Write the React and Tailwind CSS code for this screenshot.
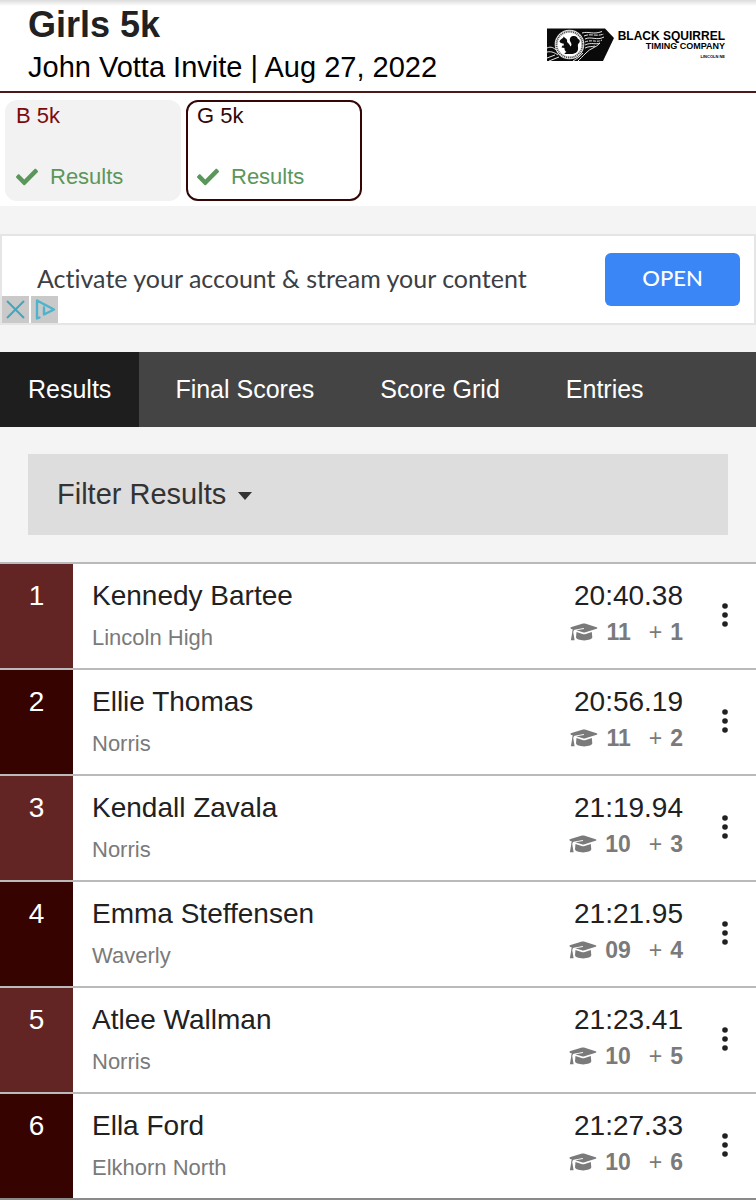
import React from "react";
import { FaCheck } from "react-icons/fa";

const runners = [
  { place: 1, name: "Kennedy Bartee", school: "Lincoln High", time: "20:40.38", grade: "11" },
  { place: 2, name: "Ellie Thomas", school: "Norris", time: "20:56.19", grade: "11" },
  { place: 3, name: "Kendall Zavala", school: "Norris", time: "21:19.94", grade: "10" },
  { place: 4, name: "Emma Steffensen", school: "Waverly", time: "21:21.95", grade: "09" },
  { place: 5, name: "Atlee Wallman", school: "Norris", time: "21:23.41", grade: "10" },
  { place: 6, name: "Ella Ford", school: "Elkhorn North", time: "21:27.33", grade: "10" },
];

function Squirrel() {
  return (
    <svg viewBox="0 0 67 34" className="h-[34px] w-[67px]" aria-hidden="true">
      <path d="M0 0.500H58L67 10L56 33H0Z" fill="#0a0a0a" />
      <g fill="none" stroke="#fff" strokeWidth="0.9">
        <path d="M0 20C4 18 7 20 9 22M0 24C5 23 8 25 11 27M0 30L8 27M2 33L12 29" />
        <path d="M35 5C42 3 46 7 55 3.500" />
        <path d="M37 8C44 5 48 9 57 6" strokeDasharray="4 1" />
        <path d="M38 11C44 8 50 13 57 9" />
        <path d="M38 14C45 11 50 15 55 12" strokeDasharray="3 1" />
        <path d="M38 17C44 14 49 17 53 15C49 20 43 20 39 25C36 28 33 31 31 33" />
        <path d="M38 20C42 18 45 19 48 18M36 25C33 29 29 31 26 33" />
      </g>
      <circle cx="22.5" cy="16.500" r="14.8" fill="#e8e8e8" />
      <circle cx="22.5" cy="16.500" r="13" fill="none" stroke="#444" strokeWidth="1.8" strokeDasharray="1 0.9" />
      <circle cx="22.5" cy="16.500" r="11.6" fill="#fff" />
      <path
        d="M12.500 13.500C13 11.500 15 10.500 16 10L16.800 8.500L18 10C20 11 20.500 12.500 20 14C21.500 15 22.800 17 23.500 18.500C25 17 24.500 15.500 23.500 14C22 11.500 23 8.500 26 8C29 7.500 30.500 9 31 11C33 11.500 33.500 14 31.500 15.500C30 17 31.500 19 31 21.500C30.500 24.500 27.500 26 24 26H17.500C17.500 24.500 19 24.500 19.500 24C18 23 17.200 21.500 17.500 20L14.500 19.500L15.500 17.500L17 17.500L16.500 15.500C15 15.500 13 15 12.500 13.500Z"
        fill="#0a0a0a"
      />
    </svg>
  );
}

function GradCap() {
  return (
    <svg viewBox="0 0 28 18" className="mr-2 h-[18px] w-7" fill="#7a7a7a" aria-hidden="true">
      <path d="M0.500 5C0.500 4.500 1 4.300 1.500 4.100L13 0.600C13.700 0.400 14.300 0.400 15 0.600L26.600 4.200C27.600 4.500 27.600 5.400 26.600 5.700L15.500 9.200C14.500 9.500 13.700 9.500 12.800 9.200L6.300 7.200L14 6L13.800 5.100L4.600 6.700C3.600 7.300 3.300 8.300 3.300 9.400L4.600 17.300H0.900L2.200 9.400C2.100 8.300 2.300 7.300 2.900 6.400L1.300 5.900C0.800 5.700 0.500 5.400 0.500 5Z" />
      <path d="M6.500 9.100L12.500 11C13.700 11.300 14.600 11.300 15.800 11L21.800 9.100L22.300 14.300C22.300 16 18.500 17.400 14.200 17.400C9.800 17.400 6 16 6 14.300Z" />
    </svg>
  );
}

function EventCard({ label, active }) {
  return (
    <a
      href="#event"
      className={
        active
          ? "flex h-[101px] w-44 flex-col justify-between rounded-xl border-2 border-[#350606] bg-white px-[9px] pb-2 text-[#350606]"
          : "flex h-[101px] w-44 flex-col justify-between rounded-xl border-2 border-[#f2f2f2] bg-[#f2f2f2] px-[9px] pb-2 text-[#7d0b0b]"
      }
    >
      <span className="text-[22px] leading-7">{label}</span>
      <span className="flex items-center gap-3 text-[22px] leading-7 text-[#5b965b]">
        <FaCheck className="size-[22px]" />
        Results
      </span>
    </a>
  );
}

function ResultRow({ runner }) {
  return (
    <li className="flex h-[106px] border-t-2 border-[#bababa] bg-white">
      <div
        className={
          runner.place % 2
            ? "w-[73px] bg-[#632523] pt-4 text-center text-[28px] leading-8 text-white"
            : "w-[73px] bg-[#370300] pt-4 text-center text-[28px] leading-8 text-white"
        }
      >
        {runner.place}
      </div>
      <div className="flex-1 pt-4 pl-[19px]">
        <div className="text-[28px] leading-8 text-[#212121]">{runner.name}</div>
        <div className="pt-3 text-[22px] leading-7 text-[#7a7a7a]">{runner.school}</div>
      </div>
      <div className="flex flex-col items-end pt-4">
        <div className="text-[28px] leading-8 text-[#212121]">{runner.time}</div>
        <div className="flex items-center pt-1.5 text-[23px] leading-7 font-bold text-[#7a7a7a]">
          <GradCap />
          <span>{runner.grade}</span>
          <span className="ml-[18px] font-normal">+</span>
          <span className="ml-2">{runner.place}</span>
        </div>
      </div>
      <button type="button" aria-label="More options" className="flex w-[73px] items-center justify-center pb-0.5 pl-2.5">
        <svg viewBox="0 0 6 24" className="h-6 w-1.5" fill="#212121">
          <circle cx="3" cy="3" r="2.8" />
          <circle cx="3" cy="12" r="2.8" />
          <circle cx="3" cy="21" r="2.8" />
        </svg>
      </button>
    </li>
  );
}

export default function App() {
  return (
    <div className="min-h-screen bg-[#f4f4f4] font-['Liberation_Sans',Arial,sans-serif]">
      <header className="flex items-start justify-between border-b-2 border-[#4d1a1c] bg-linear-to-b from-[#dcdcdc] to-white to-[6px] pr-[31px] pl-7">
        <div className="pt-[5px] pb-1.5">
          <h1 className="text-[36px] leading-10 font-bold text-[#212121]">Girls 5k</h1>
          <p className="pt-1 text-[29px] leading-9 text-black">John Votta Invite | Aug 27, 2022</p>
        </div>
        <div className="flex gap-1 pt-7 text-black">
          <Squirrel />
          <div className="flex flex-col items-end pt-0.5 font-bold">
            <span className="text-[12px] leading-3">BLACK SQUIRREL</span>
            <span className="text-[9px] leading-[9px]">TIMING COMPANY</span>
            <span className="pt-1 text-[4px] leading-[4px]">LINCOLN NE</span>
          </div>
        </div>
      </header>

      <div className="flex gap-[5px] bg-white px-[5px] pt-[7px] pb-[5px]">
        <EventCard label="B 5k" />
        <EventCard label="G 5k" active />
      </div>

      <section className="relative mt-7 flex h-[91px] items-center justify-between border-2 border-[#e5e5e5] bg-white pr-3.5 pl-[35px]">
        <p className="pb-1 text-[25px] leading-8 text-[#3c4043] font-['Lato',sans-serif] [font-variant-ligatures:none]">
          Activate your account &amp; stream your content
        </p>
        <button
          type="button"
          className="h-[53px] w-[135px] rounded-md bg-[#3b86f7] pb-1 text-[22px] font-medium text-white font-['Lato',sans-serif]"
        >
          OPEN
        </button>
        <div className="absolute bottom-0 left-0 flex gap-0.5">
          <button type="button" aria-label="Close ad" className="size-[27px] bg-[#c9c9c9]">
            <svg viewBox="0 0 27 27" className="size-[27px]" fill="none" stroke="#42a5bd" strokeWidth="2">
              <path d="M5 5L22 22M22 5L5 22" />
            </svg>
          </button>
          <a href="#adchoices" aria-label="AdChoices" className="size-[27px] bg-[#c9c9c9]">
            <svg viewBox="0 0 27 27" className="size-[27px]" fill="none" stroke="#4fb3cb" strokeWidth="2.4" strokeLinejoin="round" strokeLinecap="round">
              <path d="M8.500 21.500L6 22.500V4.500L23 13.500L13 18.500V11.500M13 8.200V8.400" />
            </svg>
          </a>
        </div>
      </section>

      <nav className="mt-[27px] flex h-[75px] gap-0.5 bg-[#444] text-[25px] text-white">
        <a href="#results" className="mr-0.5 flex items-center bg-[#1e1e1e] px-7">Results</a>
        <a href="#scores" className="flex items-center px-8">Final Scores</a>
        <a href="#grid" className="flex items-center px-8">Score Grid</a>
        <a href="#entries" className="flex items-center px-8">Entries</a>
      </nav>

      <main>
        <div className="px-7 py-[27px]">
          <button type="button" className="flex h-[81px] w-full items-center gap-3 bg-[#ddd] px-[29px] text-[29px] text-[#333]">
            Filter Results
            <svg viewBox="0 0 14 8" className="mt-0.5 h-2 w-3.5" fill="#333">
              <path d="M0 0H14L7 8Z" />
            </svg>
          </button>
        </div>
        <ol>
          {runners.map((r) => (
            <ResultRow key={r.place} runner={r} />
          ))}
        </ol>
        <div className="h-0.5 bg-[#8a8a8a]" />
      </main>
    </div>
  );
}
